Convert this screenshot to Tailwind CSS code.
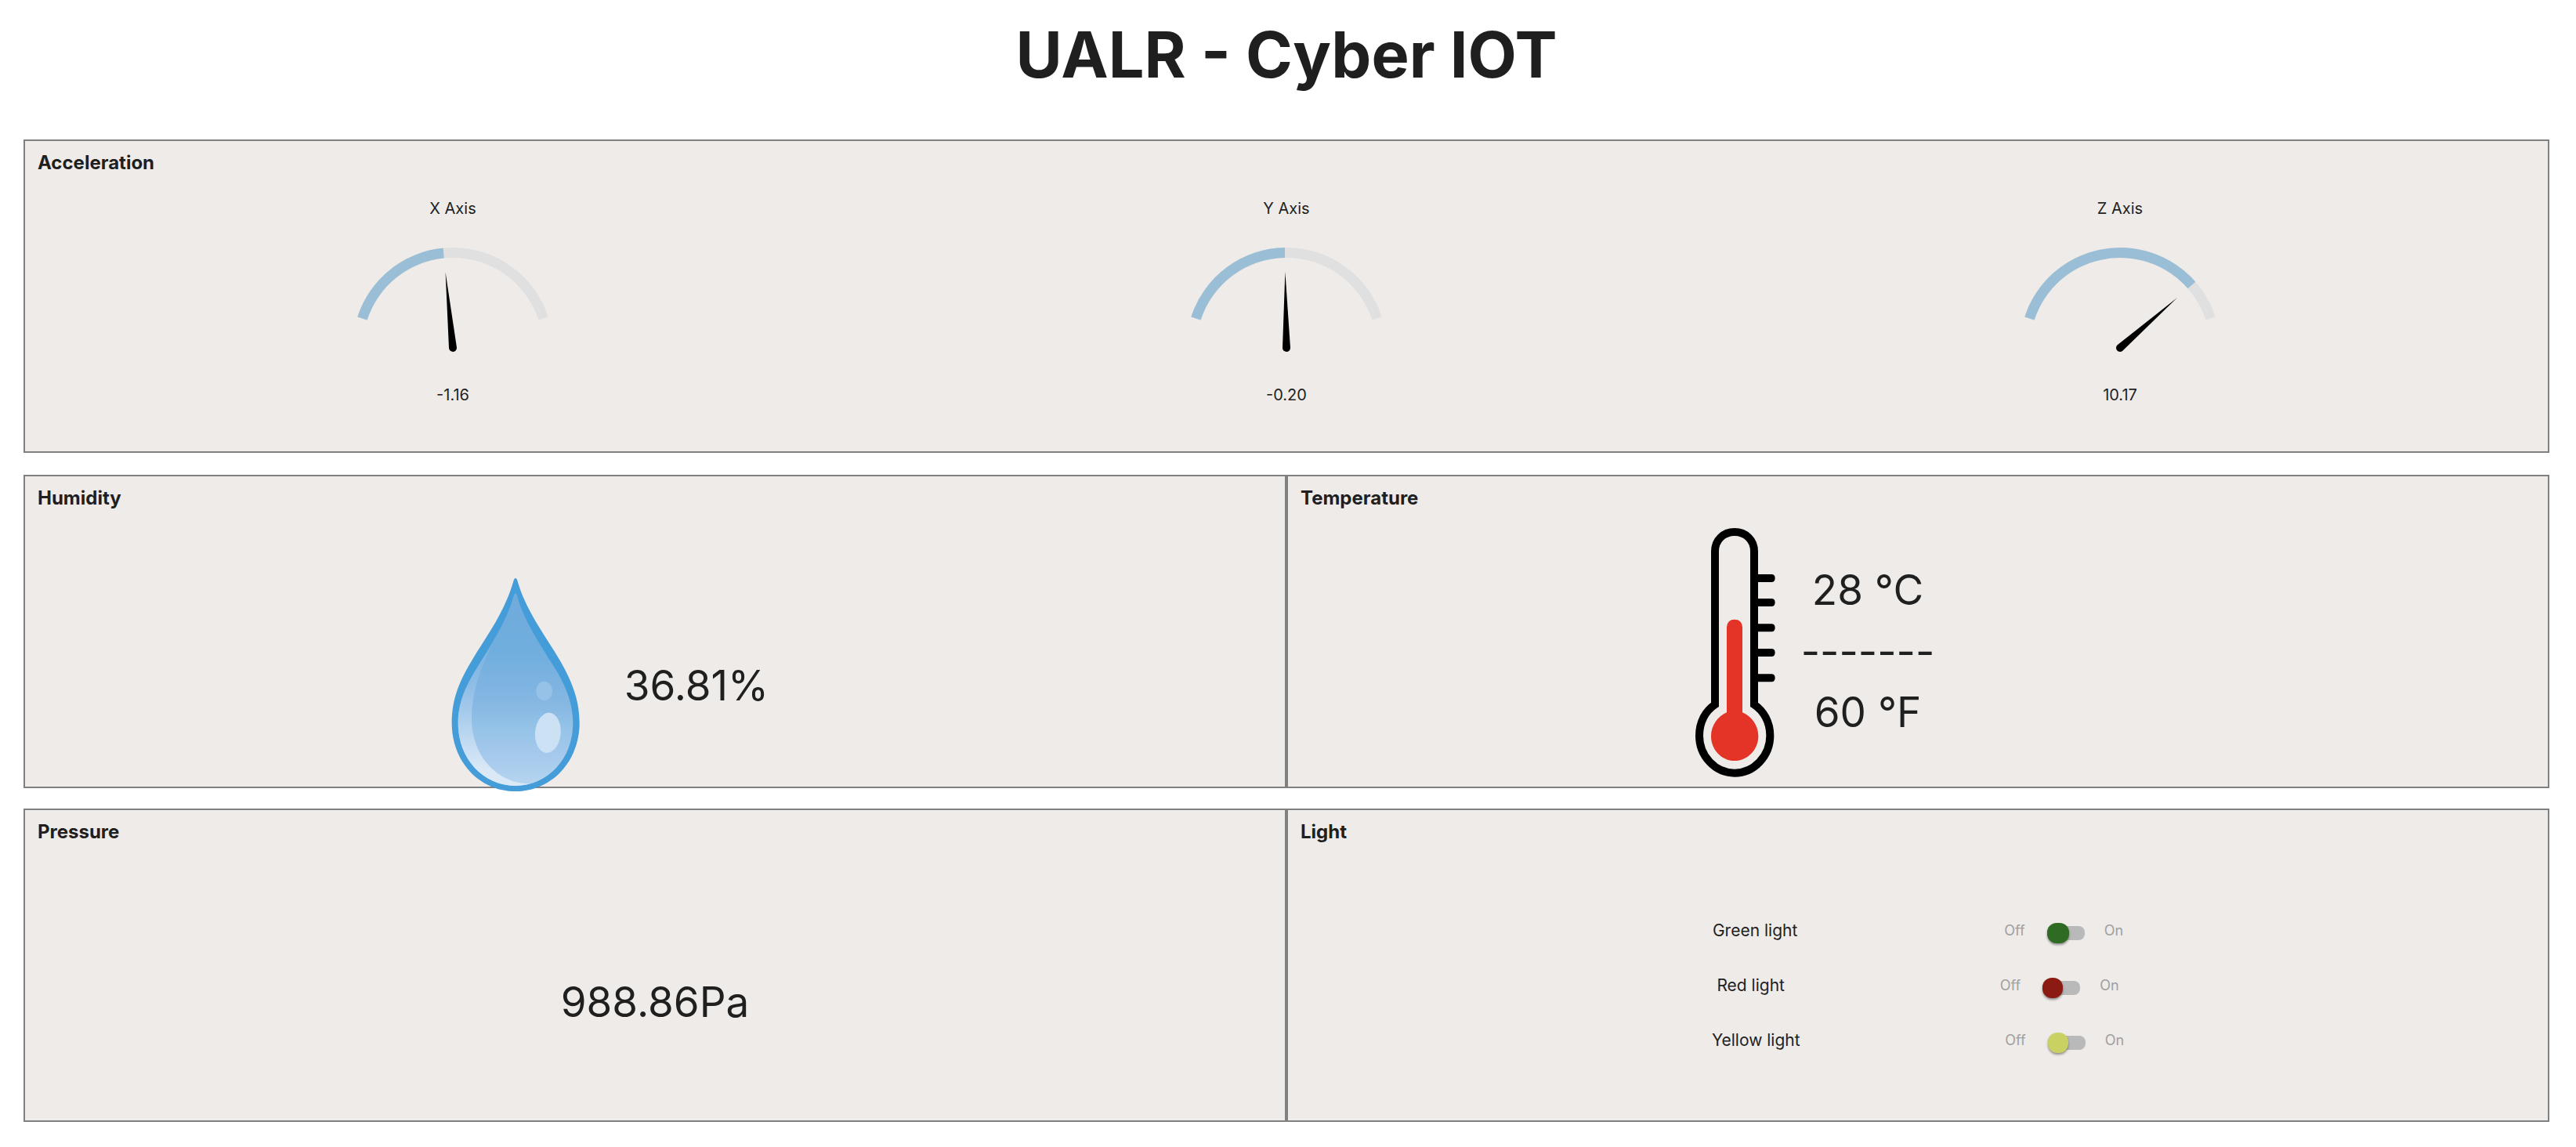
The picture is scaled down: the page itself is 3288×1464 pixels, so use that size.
<!DOCTYPE html>
<html lang="en">
<head>
<meta charset="utf-8">
<title>UALR - Cyber IOT</title>
<script src="https://cdn.jsdelivr.net/npm/@tailwindcss/browser@4"></script>
</head>
<body class="bg-white pl-[30px] pr-[34px] pb-8 font-['Inter',sans-serif] text-[#1f1f1f]">
<h1 class="flex h-[178px] items-start justify-center pt-[18px] text-[81px] leading-[104px] font-bold">UALR - Cyber IOT</h1>
<main>
<section class="h-[400px] border-2 border-[#808080] bg-[#eeebe8] px-4 pt-3.5">
<h2 class="text-[24px] leading-7 font-bold">Acceleration</h2>
<div class="-mx-0.5 mt-8 grid grid-cols-3 text-center text-[20px] leading-6">
<div class="flex flex-col items-center">
<h3>X Axis</h3>
<svg class="mt-9 mb-[34px] h-[144px] w-[260px]" viewBox="-130 -130 260 144"><use href="#track"/><path d="M-121.7-39.6A128 128 0 0 1-12.4-127.4L-11.2-114.5A115 115 0 0 0-109.4-35.5Z" fill="#9abed6"/><use href="#needle" transform="rotate(-5.57)"/></svg>
<p>-1.16</p>
</div>
<div class="flex flex-col items-center">
<h3>Y Axis</h3>
<svg class="mt-9 mb-[34px] h-[144px] w-[260px]" viewBox="-130 -130 260 144"><use href="#track"/><path d="M-121.7-39.6A128 128 0 0 1-2.1-128L-1.9-115A115 115 0 0 0-109.4-35.5Z" fill="#9abed6"/><use href="#needle" transform="rotate(-0.96)"/></svg>
<p>-0.20</p>
</div>
<div class="flex flex-col items-center">
<h3>Z Axis</h3>
<svg class="mt-9 mb-[34px] h-[144px] w-[260px]" viewBox="-130 -130 260 144"><defs><path id="track" d="M-121.7-39.6A128 128 0 0 1 121.7-39.6L109.4-35.5A115 115 0 0 0-109.4-35.5Z" fill="#e0e0e0"/><path id="needle" d="M0-97L5 0A5 5 0 0 1-5 0Z" fill="#000"/></defs><use href="#track"/><path d="M-121.7-39.6A128 128 0 0 1 96.3-84.3L86.5-75.7A115 115 0 0 0-109.4-35.5Z" fill="#9abed6"/><use href="#needle" transform="rotate(48.8)"/></svg>
<p>10.17</p>
</div>
</div>
</section>
<div class="mt-7 grid grid-cols-2">
<section class="flex h-[400px] flex-col border-2 border-[#808080] bg-[#eeebe8] px-4 pt-3.5">
<h2 class="text-[24px] leading-7 font-bold">Humidity</h2>
<div class="mt-[87px] flex items-start justify-center gap-14 pr-[116px]">
<svg class="h-[274px] w-[166px] shrink-0" viewBox="105 51 498 822" role="img" aria-label="Water drop">
<defs>
<linearGradient id="water" x1="0" y1="0" x2="0" y2="1"><stop offset="0" stop-color="#6fabdc"/><stop offset=".3" stop-color="#70aede"/><stop offset=".55" stop-color="#84b6e2"/><stop offset=".72" stop-color="#97c4e8"/><stop offset=".82" stop-color="#a3c8eb"/><stop offset="1" stop-color="#b6d5f0"/></linearGradient>
<linearGradient id="rim" x1="0" y1="0" x2="0" y2="1"><stop offset="0" stop-color="#70aede"/><stop offset=".35" stop-color="#8fbee6"/><stop offset=".7" stop-color="#c0daf1"/><stop offset=".9" stop-color="#dbe9f7"/></linearGradient>
</defs>
<path d="M354 54Q349 54 346 66C310 190 240 280 191 362C140 445 110 515 110 608C110 755 215 870 354 870S599 755 599 608C599 515 566 440 520 362C462 265 395 180 362 66Q359 54 354 54Z" fill="#449cd8"/>
<path d="M354 112Q350 112 347 122C325 200 285 270 228 362C180 440 134 510 134 610C134 745 230 849 354 849S574 745 574 610C574 520 536 445 490 375C430 280 378 195 361 122Q358 112 354 112Z" fill="url(#water)"/>
<path d="M285 268C268 300 250 328 228 362C180 440 134 510 134 610C134 745 230 849 354 849Q385 849 412 841C285 842 186 735 186 590C186 480 232 370 285 268Z" fill="url(#rim)"/>
<ellipse cx="464" cy="486" rx="31" ry="37" fill="#97c2e7"/>
<ellipse cx="478" cy="646" rx="49" ry="77" transform="rotate(5 478 646)" fill="#cde1f5"/>
</svg>
<p class="mt-[106px] text-[53px] leading-[64px]">36.81%</p>
</div>
</section>
<section class="flex h-[400px] flex-col border-2 border-[#808080] bg-[#eeebe8] px-4 pt-3.5">
<h2 class="text-[24px] leading-7 font-bold">Temperature</h2>
<div class="mt-[22px] flex items-start justify-center gap-8 pr-[264px]">
<svg class="h-[322px] w-[104px] shrink-0" viewBox="190 96 312 966" role="img" aria-label="Thermometer">
<path d="M268 778V191C268 148 300 117 343 117S418 148 418 191V778C455 802 479 846 479 897C479 974 418 1040 343 1040S208 974 208 897C208 846 231 802 268 778Z" fill="none" stroke="#000" stroke-width="30"/>
<path d="M420 294H484M420 387H484M420 484H484M420 579H484M420 676H484" stroke="#000" stroke-width="30"/>
<path d="M484 279q14 0 14 15t-14 15zM484 372q14 0 14 15t-14 15zM484 469q14 0 14 15t-14 15zM484 564q14 0 14 15t-14 15zM484 661q14 0 14 15t-14 15z" fill="#000"/>
<path d="M313 808V481Q315 452 343 452T373 481V808C409 824 434 858 434 899C434 950 393 993 343 993S253 950 253 899C253 858 278 824 313 808Z" fill="#e43327"/>
</svg>
<div class="mt-[42px] text-center text-[53px] leading-[78px]"><p>28 °C</p><p>-------</p><p>60 °F</p></div>
</div>
</section>
</div>
<div class="mt-[26px] grid grid-cols-2">
<section class="h-[400px] border-2 border-[#808080] bg-[#eeebe8] px-4 pt-3.5">
<h2 class="text-[24px] leading-7 font-bold">Pressure</h2>
<p class="mt-[171px] text-center text-[53px] leading-[64px]">988.86Pa</p>
</section>
<section class="h-[400px] border-2 border-[#808080] bg-[#eeebe8] px-4 pt-3.5">
<h2 class="text-[24px] leading-7 font-bold">Light</h2>
<div class="mx-auto mt-[77px] w-1/2 text-[21px] leading-[70px]">
<div class="flex h-[70px] items-center justify-around"><label for="green">Green light</label><div class="flex items-center text-[18px] text-[#a0a0a0]"><span>Off</span><span class="mr-[25px] ml-7 flex h-[26px] items-center pt-1.5"><input id="green" type="checkbox" role="switch" class="relative h-[18px] w-12 appearance-none rounded-lg bg-[#b9b9b9] before:absolute before:-top-1 before:left-0 before:h-[26px] before:w-7 before:rounded-xl before:bg-[#2f6b23] before:shadow-[0_2px_3px_rgba(0,0,0,0.4)]"></span><span>On</span></div></div>
<div class="flex h-[70px] items-center justify-around"><label for="red">Red light</label><div class="flex items-center text-[18px] text-[#a0a0a0]"><span>Off</span><span class="mr-[25px] ml-7 flex h-[26px] items-center pt-1.5"><input id="red" type="checkbox" role="switch" class="relative h-[18px] w-12 appearance-none rounded-lg bg-[#b9b9b9] before:absolute before:-top-1 before:left-0 before:size-[26px] before:rounded-xl before:bg-[#8a1a12] before:shadow-[0_2px_3px_rgba(0,0,0,0.4)]"></span><span>On</span></div></div>
<div class="flex h-[70px] items-center justify-around"><label for="yellow">Yellow light</label><div class="flex items-center text-[18px] text-[#a0a0a0]"><span>Off</span><span class="mr-[25px] ml-7 flex h-[26px] items-center pt-1.5"><input id="yellow" type="checkbox" role="switch" class="relative h-[18px] w-12 appearance-none rounded-lg bg-[#b9b9b9] before:absolute before:-top-1 before:left-0 before:size-[26px] before:rounded-xl before:bg-[#cad163] before:shadow-[0_2px_3px_rgba(0,0,0,0.4)]"></span><span>On</span></div></div>
</div>
</section>
</div>
</main>
</body>
</html>
